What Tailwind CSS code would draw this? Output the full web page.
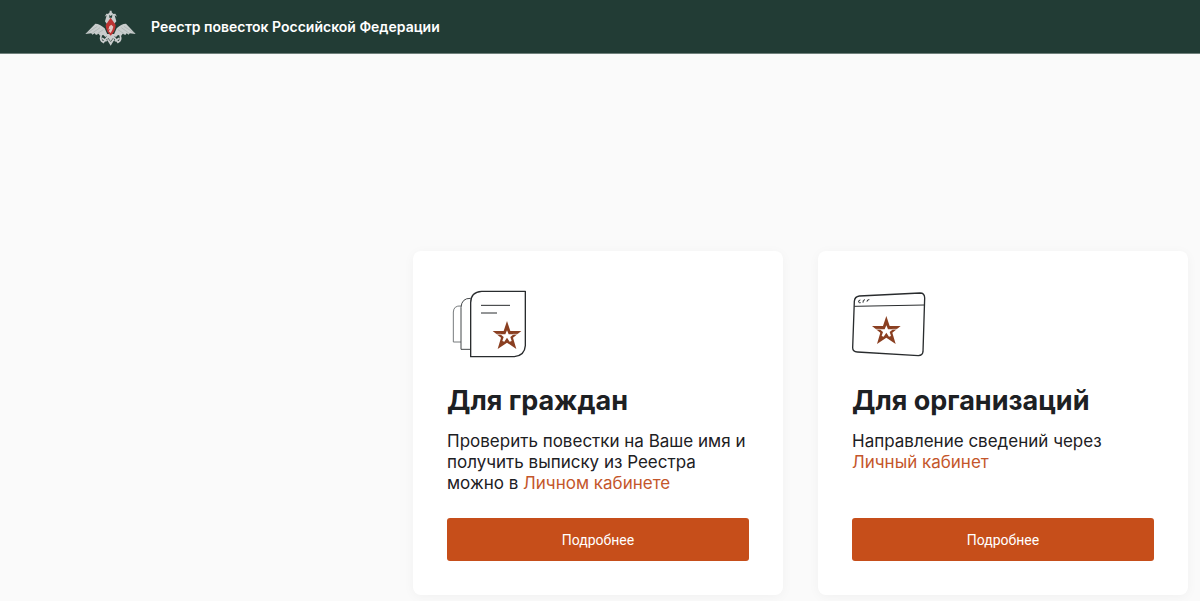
<!DOCTYPE html>
<html lang="ru">

<head>
	<meta charset="utf-8">
	<title>Реестр повесток Российской Федерации</title>
	<meta name="viewport" content="width=device-width,initial-scale=1">
	<script src="https://cdn.jsdelivr.net/npm/@tailwindcss/browser@4"></script>
</head>

<body class="min-h-screen bg-[#fafafa] font-['Inter','Liberation_Sans',sans-serif] text-[#1d2023]">
	<header class="flex h-[54px] items-center gap-3 border-b border-[#6f807b] bg-[#223c35] px-4 lg:pl-[83px]">
		<!-- emblem -->
		<svg class="h-10 w-14 shrink-0" viewBox="9 18 168 120" aria-hidden="true">
			<g fill="#c9cdcd">
				<path d="M16 99 L46 68 Q60 68 74 82 L84 104 L76 108 L70 102 L60 104 L56 98 L48 102 L44 97 L37 101 L34 97 Z" />
				<path d="M167 99 L138 68 Q123 68 110 82 L100 104 L108 108 L114 102 L124 104 L128 98 L136 102 L140 97 L146 101 L149 97 Z" />
				<path d="M80 68 L75 61 L80 43 L74 47 L79 38 L88 39 L88 50 L96 50 L97 39 L106 38 L111 47 L104 43 L109 61 L103 68 Z" />
				<path d="M89 29 H95 V34 L100 39 L92 45 L84 39 L89 34 Z" />
				<path d="M80 99 L104 99 L102 118 L92 134 L82 118 Z" />
			</g>
			<path d="M64 102 Q58 118 70 124 L82 108 M120 102 Q126 118 114 124 L102 108 M66 112 L80 120 M118 112 L104 120" fill="none" stroke="#c9cdcd" stroke-width="5" />
			<path d="M20 97 L52 76 M36 97 L60 80 M52 98 L70 86 M164 97 L132 76 M148 97 L124 80 M132 98 L114 86" fill="none" stroke="#a5afac" stroke-width="2" />
			<path d="M84 111 L92 122 L100 111" fill="none" stroke="#66756f" stroke-width="3" />
			<path d="M92 50 L107 72 Q106 92 92 104 Q78 92 77 72 Z" fill="#bd3433" />
			<path d="M88 76 L94 71 L100 77 L97 87 L92 96 L86 91 L91 84 L85 86 Z" fill="#dfc8c5" />
		</svg>
		<p class="text-sm font-semibold text-white">Реестр повесток Российской Федерации</p>
	</header>

	<main class="grid grid-cols-1 gap-[35px] px-3 pt-10 pb-2 md:grid-cols-2 lg:pt-[197px] lg:pl-[413px]">
		<section class="flex flex-col rounded-lg bg-white p-[34px] shadow-[0_2px_12px_rgba(0,0,0,0.04)]">
			<svg class="h-[75px] w-[84px]" viewBox="20 15 252 225" fill="none" aria-hidden="true">
				<path d="M62 78 Q40 76 39 96 V186 H62" stroke="#777b7d" stroke-width="3" />
				<path d="M91 55 Q64 54 62 82 V208 H91" stroke="#45494b" stroke-width="3" />
				<path d="M124 34 H255 V197 Q253 227 222 230 H91 V68 Q91 36 124 34 Z" fill="#fff" stroke="#292c2e" stroke-width="4" stroke-linejoin="round" />
				<path d="M122 76 H209 M122 99 H170" stroke="#292c2e" stroke-width="3" />
				<g transform="translate(200 166)">
					<path d="M0 -43 L10 -13 H43 L18 7 L28 41 L0 22 L-28 41 L-18 7 L-43 -13 H-10 Z" fill="#8a3f21" />
					<path d="M0 -15 L5 -3 H20 L10 5 L14 17 L8 19 L0 7 L-8 19 L-14 17 L-10 5 L-20 -3 H-5 Z" fill="#fff" />
					<path d="M-34 -3 H-18 M18 -3 H34" stroke="#fff" stroke-width="2" />
				</g>
			</svg>
			<h2 class="mt-[25px] text-[27px] leading-8 font-bold">Для граждан</h2>
			<p class="mt-[14px] min-h-[63px] text-[17px] leading-[21px]">Проверить повестки на Ваше имя и получить выписку из Реестра можно в <a href="#" class="text-[#c4562b]">Личном кабинете</a></p>
			<button type="button" class="mt-6 h-[43px] rounded-[3px] bg-[#c64e1a] font-['Roboto','Liberation_Sans',sans-serif] text-sm text-white">Подробнее</button>
		</section>

		<section class="flex flex-col rounded-lg bg-white p-[34px] shadow-[0_2px_12px_rgba(0,0,0,0.04)]">
			<svg class="h-[75px] w-[84px]" viewBox="36 15 252 225" fill="none" aria-hidden="true">
				<path d="M58 48 L240 39 Q254 39 254 54 L249 215 Q248 226 235 227 L52 216 Q38 215 38 203 L43 64 Q44 50 58 48 Z" stroke="#292c2e" stroke-width="4" />
				<path d="M43 79 L253 75" stroke="#292c2e" stroke-width="3" />
				<path d="M61 60 Q54 61 56 66 Q57 70 62 68 M75 59 Q68 59 69 68 M88 59 Q81 58 81 65" stroke="#292c2e" stroke-width="3" />
				<g transform="translate(139 151)">
					<path d="M0 -43 L10 -13 H43 L18 7 L28 41 L0 22 L-28 41 L-18 7 L-43 -13 H-10 Z" fill="#8a3f21" />
					<path d="M0 -15 L5 -3 H20 L10 5 L14 17 L8 19 L0 7 L-8 19 L-14 17 L-10 5 L-20 -3 H-5 Z" fill="#fff" />
					<path d="M-34 -3 H-18 M18 -3 H34" stroke="#fff" stroke-width="2" />
				</g>
			</svg>
			<h2 class="mt-[25px] text-[27px] leading-8 font-bold">Для организаций</h2>
			<p class="mt-[14px] min-h-[63px] text-[17px] leading-[21px]">Направление сведений через <a href="#" class="text-[#c4562b]">Личный кабинет</a></p>
			<button type="button" class="mt-6 h-[43px] rounded-[3px] bg-[#c64e1a] font-['Roboto','Liberation_Sans',sans-serif] text-sm text-white">Подробнее</button>
		</section>
	</main>
</body>

</html>
